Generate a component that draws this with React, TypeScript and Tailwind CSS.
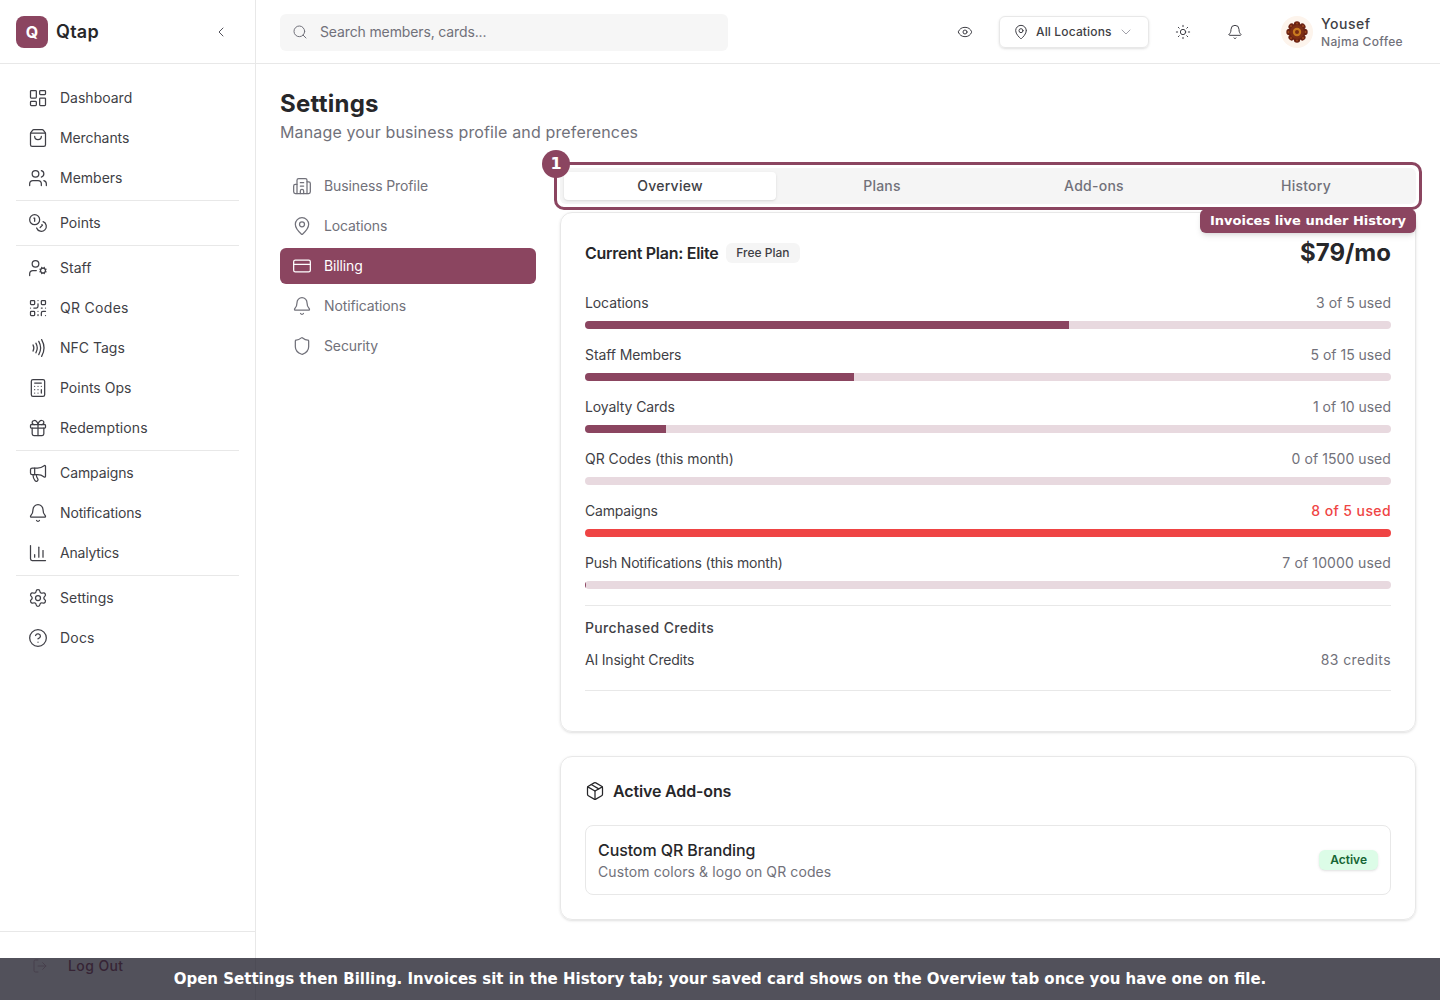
import {
  LayoutDashboard, ShoppingBag, Users, Coins, UserCog, QrCode, Nfc, Calculator, Gift, Megaphone, Bell, ChartColumn,
  Settings, CircleHelp, LogOut, Building2, MapPin, CreditCard, Shield, Package, Eye, Sun, ChevronLeft, ChevronDown, Search,
} from "lucide-react";

const groups = [
  [["Dashboard", LayoutDashboard, ""], ["Merchants", ShoppingBag, "tracking-[-0.1px]"], ["Members", Users, ""]],
  [["Points", Coins, ""]],
  [["Staff", UserCog, ""], ["QR Codes", QrCode, "tracking-[0.3px]"], ["NFC Tags", Nfc, ""], ["Points Ops", Calculator, ""], ["Redemptions", Gift, "tracking-[0.1px]"]],
  [["Campaigns", Megaphone, "tracking-[-0.1px]"], ["Notifications", Bell, "tracking-[-0.15px]"], ["Analytics", ChartColumn, "tracking-[-0.2px]"]],
  [["Settings", Settings, ""], ["Docs", CircleHelp, "tracking-[0.2px]"]],
] as const;

const settingsNav = [
  ["Business Profile", Building2, false],
  ["Locations", MapPin, false],
  ["Billing", CreditCard, true],
  ["Notifications", Bell, false],
  ["Security", Shield, false],
] as const;

const usage = [
  ["Locations", "3 of 5 used", 60, false, "tracking-[-0.1px]", ""],
  ["Staff Members", "5 of 15 used", 33.33, false, "tracking-[-0.1px]", ""],
  ["Loyalty Cards", "1 of 10 used", 10, false, "tracking-[-0.1px]", ""],
  ["QR Codes (this month)", "0 of 1500 used", 0, false, "tracking-[-0.05px]", "tracking-[0.07px]"],
  ["Campaigns", "8 of 5 used", 100, true, "tracking-[-0.2px]", "tracking-[0.4px]"],
  ["Push Notifications (this month)", "7 of 10000 used", 0.15, false, "tracking-[-0.2px]", "tracking-[0.13px]"],
] as const;

function Mandala() {
  const petals = [0, 45, 90, 135, 180, 225, 270, 315];
  return (
    <svg width="32" height="32" viewBox="0 0 32 32">
      <circle cx="16" cy="16" r="16" fill="#fdf4ec" />
      {petals.map((a) => (
        <g key={a} transform={`rotate(${a} 16 16)`}>
          <circle cx="16" cy="8.5" r="3.2" fill="#6b2212" />
          <circle cx="16" cy="7.5" r="0.9" fill="#a34a1c" />
        </g>
      ))}
      <circle cx="16" cy="16" r="7" fill="#7d2e14" />
      <circle cx="16" cy="16" r="4.2" fill="#c97a1f" />
      <circle cx="16" cy="16" r="2" fill="#7a2c12" />
    </svg>
  );
}

export default function App() {
  return (
    <div className="relative flex h-[1000px] w-full overflow-hidden bg-white font-['Inter',sans-serif] text-[#27272a]">
      <aside className="flex w-[256px] shrink-0 flex-col border-r border-[#e8e8e8]">
        <div className="flex h-[64px] shrink-0 items-center border-b border-[#e8e8e8] pl-4 pr-[26px]">
          <div className="flex h-8 w-8 items-center justify-center rounded-lg bg-[#8b4560] text-base font-bold text-white">Q</div>
          <span className="ml-2 text-lg font-semibold tracking-[0.25px] text-[#27272a]">Qtap</span>
          <ChevronLeft className="ml-auto h-4 w-4 text-[#52525b]" strokeWidth={1.5} />
        </div>
        <nav className="flex-1 px-4 pt-[14px]">
          {groups.map((g, i) => (
            <div key={i}>
              {i > 0 && <div className="my-[2px] h-px bg-[#e8e8e8]" />}
              {g.map(([label, Icon, tr]) => (
                <div key={label} className="flex h-10 items-center gap-3 px-3 text-sm text-[#3f3f46]">
                  <Icon className="h-5 w-5" strokeWidth={1.5} />
                  <span className={tr}>{label}</span>
                </div>
              ))}
            </div>
          ))}
        </nav>
        <div className="h-[69px] shrink-0 border-t border-[#e8e8e8] px-4 pt-[14px]">
          <div className="flex h-10 items-center px-4 text-sm font-medium text-[#8b4560]">
            <LogOut className="h-4 w-4 opacity-40" strokeWidth={1.5} />
            <span className="ml-5 tracking-[0.4px]">Log Out</span>
          </div>
        </div>
      </aside>

      <div className="flex min-w-0 flex-1 flex-col">
        <header className="flex h-[64px] shrink-0 items-center border-b border-[#e8e8e8] pl-6 pr-[36px]">
          <div className="mt-px flex h-[37px] w-[448px] items-center gap-3 rounded-md bg-[#f6f6f6] px-3 text-sm text-[#71717a]">
            <Search className="h-4 w-4" strokeWidth={1.5} />
            <span className="tracking-[-0.13px]">Search members, cards...</span>
          </div>
          <Eye className="ml-[229px] h-4 w-4 text-[#3f3f46]" strokeWidth={1.5} />
          <div className="ml-[26px] flex h-8 w-[150px] items-center rounded-md border border-[#e8e8e8] pl-[13px] pr-[14px] text-xs font-medium text-[#3f3f46] shadow-sm">
            <MapPin className="h-4 w-4" strokeWidth={1.5} />
            <span className="ml-[7px] tracking-[0.15px]">All Locations</span>
            <ChevronDown className="ml-auto h-4 w-4 text-[#a1a1aa]" strokeWidth={1.5} />
          </div>
          <Sun className="ml-[26px] h-4 w-4 text-[#3f3f46]" strokeWidth={1.5} />
          <Bell className="ml-9 h-4 w-4 text-[#3f3f46]" strokeWidth={1.5} />
          <div className="ml-[38px] flex items-center gap-2">
            <Mandala />
            <div className="flex flex-col">
              <span className="text-sm font-medium leading-5 tracking-[0.5px] text-[#3f3f46]">Yousef</span>
              <span className="text-xs font-medium leading-4 tracking-[0.33px] text-[#71717a]">Najma Coffee</span>
            </div>
          </div>
        </header>

        <main className="flex-1 pl-6 pr-6 pt-6">
          <h1 className="text-2xl font-bold leading-8 tracking-[0.25px] text-[#27272a]">Settings</h1>
          <p className="text-base leading-6 tracking-[0.14px] text-[#71717a]">Manage your business profile and preferences</p>
          <div className="mt-6 flex gap-6">
            <div className="flex w-[256px] shrink-0 flex-col gap-1">
              {settingsNav.map(([label, Icon, active]) => (
                <div
                  key={label}
                  className={
                    active
                      ? "flex h-9 items-center gap-3 rounded-md bg-[#8b4560] px-3 text-sm text-white"
                      : "flex h-9 items-center gap-3 rounded-md px-3 text-sm text-[#71717a]"
                  }
                >
                  <Icon className="h-5 w-5" strokeWidth={1.5} />
                  <span className="tracking-[-0.12px]">{label}</span>
                </div>
              ))}
            </div>

            <div className="flex min-w-0 flex-1 flex-col">
              <div className="flex h-9 items-center rounded-md bg-[#f5f5f5] p-1 text-sm font-medium tracking-[0.25px] text-[#71717a]">
                <div className="flex h-7 flex-1 items-center justify-center rounded bg-white text-[#3f3f46] shadow-sm">Overview</div>
                <div className="flex h-7 flex-1 items-center justify-center">Plans</div>
                <div className="flex h-7 flex-1 items-center justify-center">Add-ons</div>
                <div className="flex h-7 flex-1 items-center justify-center">History</div>
              </div>

              <section className="mt-2 h-[520px] rounded-xl border border-[#e8e8e8] px-6 pt-6 shadow-sm">
                <div className="flex h-8 items-center">
                  <span className="text-base font-semibold tracking-[-0.28px] text-[#27272a]">Current Plan: Elite</span>
                  <span className="ml-2 rounded-md bg-[#f5f5f5] px-[10px] py-[2px] text-xs font-medium text-[#3f3f46]">Free Plan</span>
                  <span className="ml-auto text-2xl font-bold text-[#27272a]">$79/mo</span>
                </div>
                <div className="mt-6 flex flex-col">
                  {usage.map(([label, value, pct, over, ltr, vtr]) => (
                    <div key={label} className="h-[52px]">
                      <div className="flex h-5 items-center justify-between text-sm">
                        <span className={`text-[#3f3f46] ${ltr}`}>{label}</span>
                        <span className={`${over ? "font-medium text-[#ef4444]" : "text-[#71717a]"} ${vtr}`}>{value}</span>
                      </div>
                      <div className="mt-2 h-2 overflow-hidden rounded-full bg-[#e8d9df]">
                        <div className={over ? "h-full bg-[#ef4444]" : "h-full bg-[#8b4560]"} style={{ width: `${pct}%` }} />
                      </div>
                    </div>
                  ))}
                </div>
                <div className="border-t border-[#e8e8e8] pt-3">
                  <div className="flex h-5 items-center text-sm font-medium tracking-[0.35px] text-[#3f3f46]">Purchased Credits</div>
                  <div className="mt-3 flex h-5 items-center justify-between text-sm">
                    <span className="tracking-[-0.2px] text-[#3f3f46]">AI Insight Credits</span>
                    <span className="tracking-[0.4px] text-[#71717a]">83 credits</span>
                  </div>
                  <div className="mt-5 border-t border-[#e8e8e8]" />
                </div>
              </section>

              <section className="mt-6 h-[164px] rounded-xl border border-[#e8e8e8] px-6 pt-6 shadow-sm">
                <div className="flex h-5 items-center gap-2 text-base font-semibold tracking-[-0.15px] text-[#27272a]">
                  <Package className="h-5 w-5" strokeWidth={1.5} />
                  <span>Active Add-ons</span>
                </div>
                <div className="mt-6 flex h-[70px] items-center justify-between rounded-lg border border-[#e8e8e8] px-3">
                  <div className="flex flex-col">
                    <span className="text-base font-medium leading-6 tracking-[-0.1px] text-[#27272a]">Custom QR Branding</span>
                    <span className="text-sm leading-5 tracking-[0.1px] text-[#71717a]">Custom colors &amp; logo on QR codes</span>
                  </div>
                  <span className="rounded-md bg-[#dcfce7] px-[11px] py-[2px] text-xs font-semibold text-[#166534] shadow-sm">Active</span>
                </div>
              </section>
            </div>
          </div>
        </main>
      </div>

      <div className="absolute left-[554px] top-[162px] h-[48px] w-[868px] rounded-[10px] border-[3px] border-[#8b4560]" />
      <div className="absolute left-[542px] top-[150px] flex h-7 w-7 items-center justify-center rounded-full bg-[#8b4560] font-['DejaVu_Sans',sans-serif] text-base font-bold text-white">1</div>
      <div className="absolute left-[1200px] top-[209px] flex h-6 w-[216px] items-center justify-center rounded-md bg-[#8b4560] font-['DejaVu_Sans',sans-serif] text-[13px] font-bold text-white shadow-md">Invoices live under History</div>
      <div className="absolute bottom-0 left-0 flex h-[42px] w-full items-center justify-center bg-[rgba(28,26,40,0.76)] font-['DejaVu_Sans',sans-serif] text-[15px] font-bold text-white">
        Open Settings then Billing. Invoices sit in the History tab; your saved card shows on the Overview tab once you have one on file.
      </div>
    </div>
  );
}
